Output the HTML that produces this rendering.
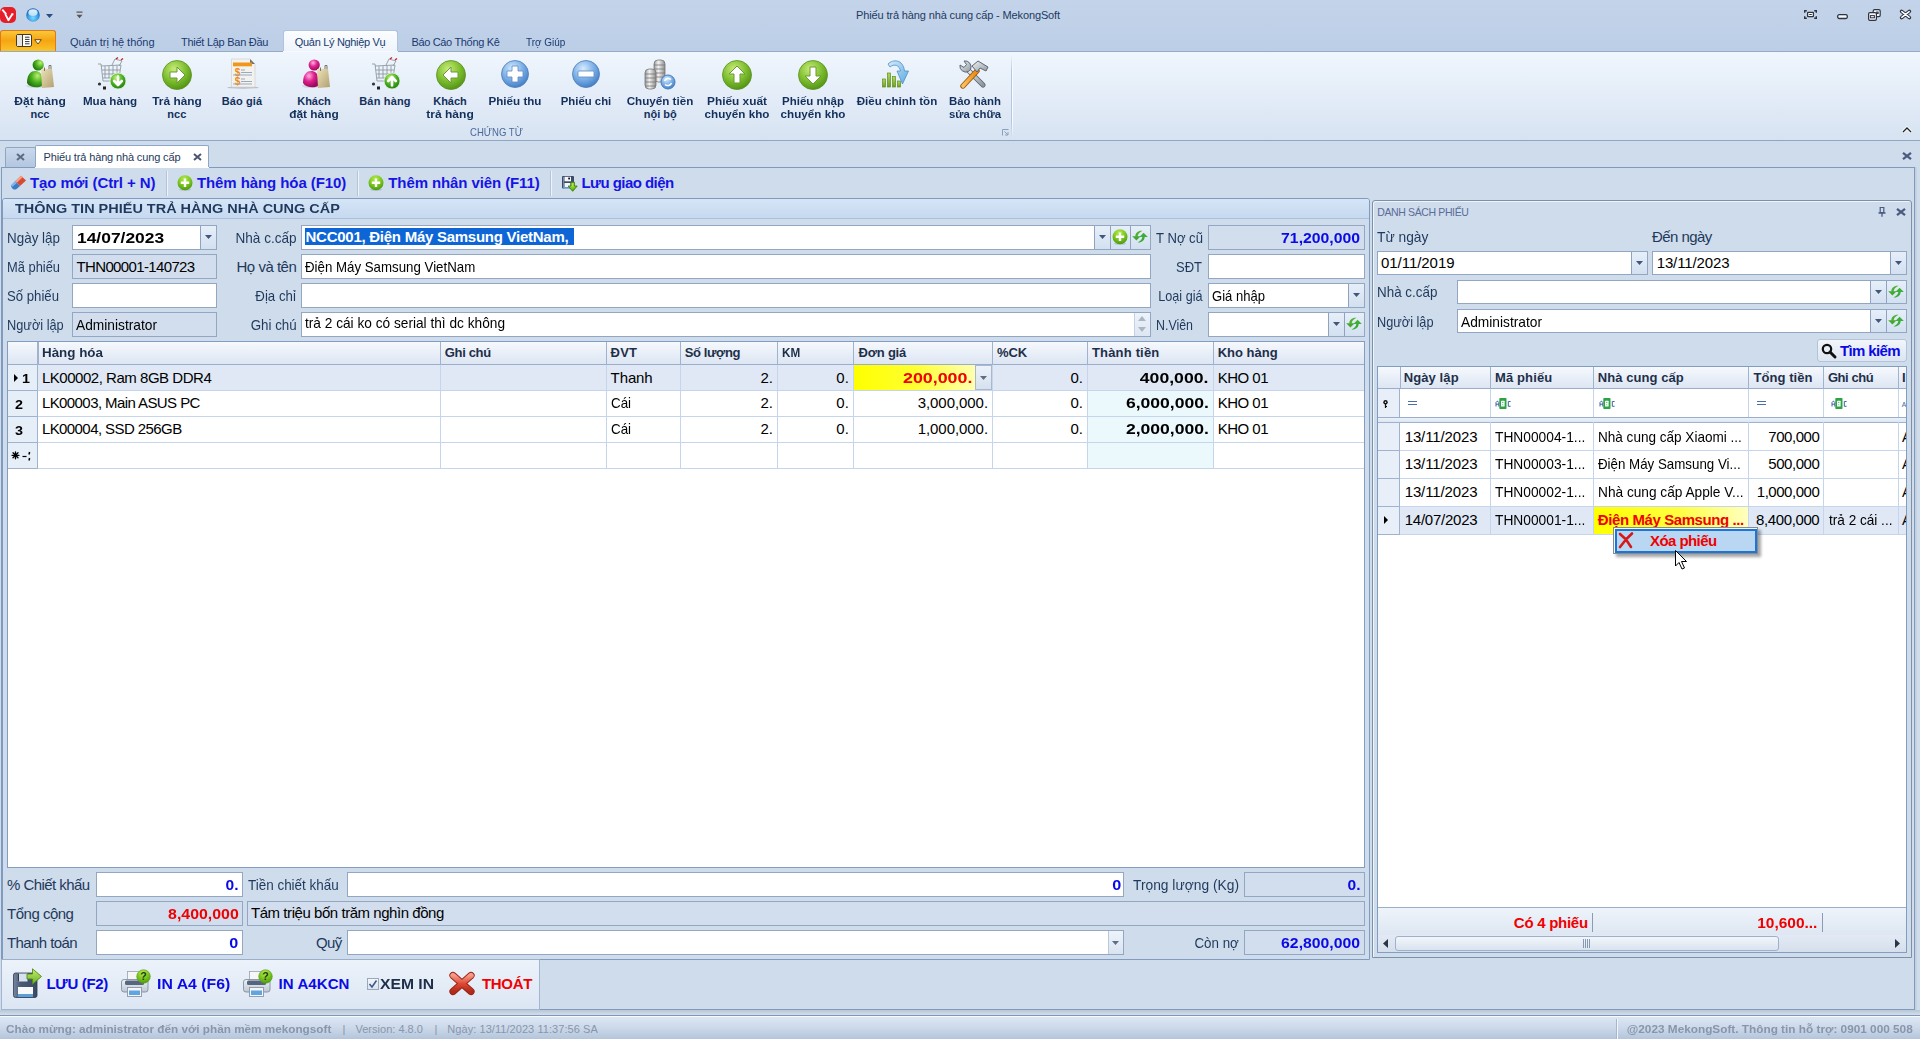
<!DOCTYPE html>
<html><head><meta charset="utf-8">
<style>
*{box-sizing:border-box}
html,body{margin:0;padding:0}
body{width:1920px;height:1039px;position:relative;overflow:hidden;background:#CFDCEC;font-family:"Liberation Sans",sans-serif;font-size:14px;color:#000}
.a{position:absolute}
.t{position:absolute;white-space:nowrap}
svg{overflow:visible}
</style></head><body>
<div class="a" style="left:0px;top:0px;width:1920px;height:52px;background:linear-gradient(#C3D4EA,#BCCEE6)"></div>
<svg class="a" style="left:0px;top:7px;" width="16" height="16" viewBox="0 0 16 16"><rect x="0" y="0" width="16" height="16" rx="5" fill="#E61E2A"/><path d="M2.3 2.6 L6.2 7.2 M5.2 6.8 L8.4 13.2 L12.6 6.8 M11.3 7.2 H13.4" stroke="#fff" stroke-width="1.9" fill="none" stroke-linejoin="round"/></svg>
<svg class="a" style="left:26px;top:8px;" width="14" height="14" viewBox="0 0 14 14"><defs><radialGradient id="sph" cx="50%" cy="70%" r="60%"><stop offset="0" stop-color="#7FDCFF"/><stop offset="0.6" stop-color="#3C9FE6"/><stop offset="1" stop-color="#1864C0"/></radialGradient><linearGradient id="sphh" x1="0" x2="0" y1="0" y2="1"><stop offset="0" stop-color="#FFFFFF"/><stop offset="1" stop-color="#BFE4F8"/></linearGradient></defs><circle cx="7" cy="7" r="6.8" fill="url(#sph)"/><ellipse cx="7" cy="4.6" rx="4.6" ry="3.4" fill="url(#sphh)" opacity="0.9"/></svg>
<svg class="a" style="left:46px;top:14px;" width="7" height="4" viewBox="0 0 7 4"><path d="M0 0 H7 L3.5 4Z" fill="#2B4E7E"/></svg>
<svg class="a" style="left:76px;top:11px;" width="8" height="8" viewBox="0 0 8 8"><rect x="0.5" y="0.5" width="6" height="1.2" fill="#555"/><path d="M0 3.5 H7 L3.5 7.5Z" fill="#555"/><path d="M0 3.5 H7 L3.5 7.5Z" fill="none" stroke="#fff" stroke-width="0.5" opacity="0.6"/></svg>
<div class="t" style="top:8.0px;height:14px;line-height:14px;font-size:11px;color:#1E3A5F;letter-spacing:-0.13px;left:558px;width:800px;text-align:center;">Phiếu trả hàng nhà cung cấp - MekongSoft</div>
<svg class="a" style="left:1804px;top:10px;" width="13" height="9" viewBox="0 0 13 9"><path d="M0.7 2.8V0.7H2.8 M10.2 0.7H12.3V2.8 M12.3 6.2V8.3H10.2 M2.8 8.3H0.7V6.2" stroke="#2D3340" stroke-width="1.4" fill="none"/><rect x="3.6" y="2.4" width="5.8" height="4.2" rx="0.6" fill="#fff" stroke="#2D3340" stroke-width="1.3"/><rect x="5.2" y="4" width="2.6" height="1" fill="#2D3340"/></svg>
<svg class="a" style="left:1837px;top:14px;" width="11" height="5" viewBox="0 0 11 5"><rect x="0.7" y="0.7" width="9.6" height="3.8" rx="1.5" fill="#F4F8FC" stroke="#2D3340" stroke-width="1.3"/></svg>
<svg class="a" style="left:1868px;top:9px;" width="13" height="12" viewBox="0 0 13 12"><rect x="5.2" y="0.6" width="7" height="7" rx="1.4" fill="#F4F8FC" stroke="#2D3340" stroke-width="1.2"/><rect x="0.6" y="3.6" width="7.8" height="7.8" rx="1.4" fill="#F4F8FC" stroke="#2D3340" stroke-width="1.2"/><rect x="2.4" y="6.6" width="4" height="2.2" fill="none" stroke="#2D3340" stroke-width="1"/><rect x="8.6" y="3" width="1.6" height="1.6" fill="none" stroke="#2D3340" stroke-width="0.9"/></svg>
<svg class="a" style="left:1900px;top:10px;" width="11" height="9" viewBox="0 0 11 9"><path d="M1.6 1.4 L9.4 7.6 M9.4 1.4 L1.6 7.6" stroke="#2D3340" stroke-width="3.6" stroke-linecap="round"/><path d="M1.8 1.6 L9.2 7.4 M9.2 1.6 L1.8 7.4" stroke="#fff" stroke-width="1.5" stroke-linecap="round"/></svg>
<div class="a" style="left:0px;top:30px;width:56px;height:22px;background:linear-gradient(#FAC83A,#F6A412 45%,#F9C82C);border:1px solid #E07A18;border-bottom:none;border-radius:3px 3px 0 0"></div>
<svg class="a" style="left:16px;top:34px;" width="16" height="13" viewBox="0 0 16 13"><rect x="0.5" y="0.5" width="15" height="12" rx="1.5" fill="#fff" stroke="#4A3A1A" stroke-width="1"/><rect x="1" y="1" width="5" height="11" fill="#E4E4E4"/><rect x="6" y="1" width="1" height="11" fill="#4A3A1A"/><path d="M9 3.2H13.5M9 5.4H13.5M9 7.6H13.5M9 9.8H13.5" stroke="#333" stroke-width="1"/></svg>
<svg class="a" style="left:34px;top:39px;" width="8" height="6" viewBox="0 0 8 6"><path d="M0.7 0.7 H7.3 L4 5 Z" fill="#fff" stroke="#6A4A10" stroke-width="1" stroke-linejoin="round"/></svg>
<div class="a" style="left:283px;top:30px;width:115px;height:22px;background:linear-gradient(#FBFDFF,#EEF4FB);border:1px solid #AFC3DE;border-bottom:none;border-radius:3px 3px 0 0"></div>
<div class="t" style="top:35.0px;height:14px;line-height:14px;font-size:11px;color:#1A3A70;letter-spacing:-0.03px;left:70px;">Quản trị hệ thống</div>
<div class="t" style="top:35.0px;height:14px;line-height:14px;font-size:11px;color:#1A3A70;letter-spacing:-0.27px;left:181px;">Thiết Lập Ban Đầu</div>
<div class="t" style="top:35.0px;height:14px;line-height:14px;font-size:11px;color:#1A3A70;letter-spacing:-0.32px;left:294.8px;">Quản Lý Nghiệp Vụ</div>
<div class="t" style="top:35.0px;height:14px;line-height:14px;font-size:11px;color:#1A3A70;letter-spacing:-0.33px;left:411.4px;">Báo Cáo Thống Kê</div>
<div class="t" style="top:35.0px;height:14px;line-height:14px;font-size:11px;color:#1A3A70;transform:scaleX(0.903);transform-origin:left center;left:525.7px;">Trợ Giúp</div>
<div class="a" style="left:0px;top:51px;width:1920px;height:90px;background:linear-gradient(#EFF6FD 0%,#E6EEF9 40%,#D7E3F2 100%);border-top:1px solid #94AAC6;border-bottom:1px solid #8FA6C4"></div>
<div class="a" style="left:283px;top:51px;width:115px;height:1px;background:#F6F9FD"></div>
<div class="a" style="left:1011px;top:55px;width:1px;height:84px;background:linear-gradient(rgba(160,180,210,0),#B5C7DF 20%,#B5C7DF 80%,rgba(160,180,210,0))"></div>
<div class="a" style="left:1012px;top:55px;width:1px;height:84px;background:linear-gradient(rgba(255,255,255,0),#F8FBFF 20%,#F8FBFF 80%,rgba(255,255,255,0))"></div>
<div class="t" style="top:125.0px;height:14px;line-height:14px;font-size:10.5px;color:#4A6898;transform:scaleX(0.911);transform-origin:left center;left:470px;">CHỨNG TỪ</div>
<svg class="a" style="left:1002px;top:129px;" width="7" height="7" viewBox="0 0 7 7"><path d="M0.5 6.5V0.5H6.5" stroke="#8BA0BC" fill="none"/><path d="M2.5 2.5L6 6M6 3V6H3" stroke="#8BA0BC" fill="none"/></svg>
<svg class="a" style="left:1902px;top:126px;" width="10" height="7" viewBox="0 0 10 7"><path d="M1 6L5 2L9 6" stroke="#fff" stroke-width="3" fill="none"/><path d="M1 6L5 2L9 6" stroke="#222" stroke-width="1.3" fill="none"/></svg>
<svg width="0" height="0" style="position:absolute"><defs>
<radialGradient id="gG" cx="70%" cy="30%" r="80%"><stop offset="0" stop-color="#B8F070"/><stop offset="0.5" stop-color="#4CB020"/><stop offset="1" stop-color="#1A6A08"/></radialGradient><radialGradient id="gA" cx="40%" cy="30%" r="75%"><stop offset="0" stop-color="#C8EC7A"/><stop offset="0.55" stop-color="#7DBE2E"/><stop offset="1" stop-color="#4E8E14"/></radialGradient>
<radialGradient id="gB" cx="40%" cy="30%" r="75%"><stop offset="0" stop-color="#D8ECFF"/><stop offset="0.55" stop-color="#78ADE6"/><stop offset="1" stop-color="#3E78C0"/></radialGradient>
<radialGradient id="gP" cx="40%" cy="30%" r="70%"><stop offset="0" stop-color="#FFB0E0"/><stop offset="0.5" stop-color="#E0208F"/><stop offset="1" stop-color="#9A0A5A"/></radialGradient>
<radialGradient id="gP2" cx="40%" cy="30%" r="75%"><stop offset="0" stop-color="#C6F27A"/><stop offset="0.5" stop-color="#4DB324"/><stop offset="1" stop-color="#1E7A10"/></radialGradient>
<linearGradient id="bag" x1="0" x2="1" y1="0" y2="1"><stop offset="0" stop-color="#EDE2B8"/><stop offset="1" stop-color="#B0A070"/></linearGradient>
<linearGradient id="coin" x1="0" x2="1"><stop offset="0" stop-color="#9A9A9A"/><stop offset="0.4" stop-color="#F2F2F2"/><stop offset="1" stop-color="#8C8C8C"/></linearGradient>
<radialGradient id="gLime" cx="45%" cy="25%" r="75%"><stop offset="0" stop-color="#B6EC4A"/><stop offset="0.6" stop-color="#76C21C"/><stop offset="1" stop-color="#4E9A10"/></radialGradient>
</defs></svg>
<svg class="a" style="left:24px;top:59px;" width="32" height="32" viewBox="0 0 32 32"><ellipse cx="11" cy="27" rx="9" ry="2" fill="#C8D2DE" opacity="0.7"/><path d="M3 24 C3 15 7 12 11 12 C15 12 18 14 18 20 L18 27 C14 29 6 29 3 24 Z" fill="url(#gG)"/><circle cx="14.2" cy="6" r="5.6" fill="url(#gG)"/><path d="M17 10 H28 L30 28 L18 29 Z" fill="url(#bag)"/><path d="M20.5 12 V8.5 M25 10 V6.5 H27 V10" stroke="#7A7468" stroke-width="1" fill="none"/></svg>
<svg class="a" style="left:97px;top:57px;" width="32" height="34" viewBox="0 0 32 34"><g stroke="#9098A0" stroke-width="0.9" fill="none"><path d="M1 7 H4 L6 24 H20"/><path d="M4 9 L24 8 L22 21 H6"/><path d="M8 9 V21 M12 9 V21 M16 8.5 V21 M20 8.5 V21 M5 13 H23 M5.5 17 H22.5"/><path d="M15 8 L18 2 L25 4 L22 9"/></g><path d="M19 2 L21 0.5 M24 3 L26 1.5" stroke="#D02020" stroke-width="1.4"/><circle cx="2.5" cy="27" r="1.6" fill="#333"/><rect x="6" y="29.5" width="3" height="3" fill="#222"/><circle cx="21" cy="24" r="8" fill="url(#gP2)" stroke="#E8F4E0" stroke-width="0.8"/><path d="M21 19.5 V27.5 M17.2 24 L21 28 L24.8 24" stroke="#fff" stroke-width="2.6" fill="none" stroke-linecap="round" stroke-linejoin="round"/></svg>
<svg class="a" style="left:161px;top:59px;" width="32" height="32" viewBox="0 0 32 32"><circle cx="16" cy="16" r="14.5" fill="url(#gA)" stroke="#5A8F20" stroke-width="0.8"/><path d="M9 13 H16 V8 L24 16 L16 24 V19 H9 Z" fill="#fff" stroke="#6A9A38" stroke-width="1"/></svg>
<svg class="a" style="left:226px;top:58px;" width="34" height="32" viewBox="0 0 34 32"><ellipse cx="17" cy="29.5" rx="16" ry="1.2" fill="#B8BEC6"/><path d="M5.5 1 H24 L29 6 V29 H5.5 Z" fill="#F2F2F0" stroke="#D4D4D2" stroke-width="0.8"/><path d="M24 1 L29 6 H24 Z" fill="#6E7278"/><rect x="7" y="4.5" width="19" height="3.8" fill="#F0961A"/><text x="11.5" y="18" font-size="10" font-weight="bold" font-family="Liberation Sans" text-anchor="middle" fill="#F08A10">$</text><text x="11.5" y="27" font-size="10" font-weight="bold" font-family="Liberation Sans" text-anchor="middle" fill="#F08A10">$</text><path d="M15 12 H19 M15 14.5 H26 M7 17 H26 M15 21 H19 M15 23.5 H26 M7 26 H26" stroke="#9AAAB8" stroke-width="1"/></svg>
<svg class="a" style="left:300px;top:59px;" width="32" height="32" viewBox="0 0 32 32"><ellipse cx="11" cy="27" rx="9" ry="2" fill="#C8D2DE" opacity="0.7"/><path d="M3 24 C3 15 7 12 11 12 C15 12 18 14 18 20 L18 27 C14 29 6 29 3 24 Z" fill="url(#gP)"/><circle cx="14.2" cy="6" r="5.6" fill="url(#gP)"/><path d="M17 10 H28 L30 28 L18 29 Z" fill="url(#bag)"/><path d="M20.5 12 V8.5 M25 10 V6.5 H27 V10" stroke="#7A7468" stroke-width="1" fill="none"/></svg>
<svg class="a" style="left:371px;top:57px;" width="32" height="34" viewBox="0 0 32 34"><g stroke="#9098A0" stroke-width="0.9" fill="none"><path d="M1 7 H4 L6 24 H20"/><path d="M4 9 L24 8 L22 21 H6"/><path d="M8 9 V21 M12 9 V21 M16 8.5 V21 M20 8.5 V21 M5 13 H23 M5.5 17 H22.5"/><path d="M15 8 L18 2 L25 4 L22 9"/></g><path d="M19 2 L21 0.5 M24 3 L26 1.5" stroke="#D02020" stroke-width="1.4"/><circle cx="2.5" cy="27" r="1.6" fill="#333"/><rect x="6" y="29.5" width="3" height="3" fill="#222"/><circle cx="21" cy="24" r="8" fill="url(#gP2)" stroke="#E8F4E0" stroke-width="0.8"/><path d="M21 28.5 V20.5 M17.2 24 L21 20 L24.8 24" stroke="#fff" stroke-width="2.6" fill="none" stroke-linecap="round" stroke-linejoin="round"/></svg>
<svg class="a" style="left:435px;top:59px;" width="32" height="32" viewBox="0 0 32 32"><circle cx="16" cy="16" r="14.5" fill="url(#gA)" stroke="#5A8F20" stroke-width="0.8"/><path d="M23 13 H16 V8 L8 16 L16 24 V19 H23 Z" fill="#fff" stroke="#6A9A38" stroke-width="1"/></svg>
<svg class="a" style="left:501px;top:59px;" width="32" height="32" viewBox="0 0 32 32"><circle cx="14" cy="15" r="13.5" fill="url(#gB)" stroke="#4A7DB8" stroke-width="0.8"/><path d="M11 7 H17 V12 H22 V18 H17 V23 H11 V18 H6 V12 H11 Z" fill="#fff" stroke="#5A88C0" stroke-width="0.8"/></svg>
<svg class="a" style="left:572px;top:59px;" width="32" height="32" viewBox="0 0 32 32"><circle cx="14" cy="15" r="13.5" fill="url(#gB)" stroke="#4A7DB8" stroke-width="0.8"/><rect x="6" y="12" width="16" height="6" rx="1" fill="#fff" stroke="#5A88C0" stroke-width="0.8"/></svg>
<svg class="a" style="left:644px;top:57px;" width="32" height="34" viewBox="0 0 32 34"><g stroke="#777" stroke-width="0.8" fill="url(#coin)"><rect x="10" y="3" width="11" height="22" rx="4"/><path d="M10 8 H21 M10 12 H21 M10 16 H21 M10 20 H21" fill="none"/><rect x="1" y="12" width="11" height="20" rx="4"/><path d="M1 17 H12 M1 21 H12 M1 25 H12 M1 29 H12" fill="none"/></g><circle cx="24" cy="25" r="7" fill="url(#gB)" stroke="#4A7DB8"/><path d="M20.5 24 A4 4 0 0 1 27 22.5 M27.5 26 A4 4 0 0 1 21 27.5" stroke="#fff" stroke-width="1.5" fill="none"/></svg>
<svg class="a" style="left:721px;top:59px;" width="32" height="32" viewBox="0 0 32 32"><circle cx="16" cy="16" r="14.5" fill="url(#gA)" stroke="#5A8F20" stroke-width="0.8"/><path d="M16 7 L24 15 H19 V24 H13 V15 H8 Z" fill="#fff" stroke="#6A9A38" stroke-width="1"/></svg>
<svg class="a" style="left:797px;top:59px;" width="32" height="32" viewBox="0 0 32 32"><circle cx="16" cy="16" r="14.5" fill="url(#gA)" stroke="#5A8F20" stroke-width="0.8"/><path d="M16 25 L24 17 H19 V8 H13 V17 H8 Z" fill="#fff" stroke="#6A9A38" stroke-width="1"/></svg>
<svg class="a" style="left:881px;top:58px;" width="32" height="33" viewBox="0 0 32 33"><defs><linearGradient id="arw" x1="0" y1="0" x2="1" y2="1"><stop offset="0" stop-color="#D8ECFB"/><stop offset="1" stop-color="#5AA8E0"/></linearGradient><linearGradient id="bar" x1="0" x2="0" y1="0" y2="1"><stop offset="0" stop-color="#B2D860"/><stop offset="1" stop-color="#6AA020"/></linearGradient></defs><g fill="url(#bar)" stroke="#5E8E1E" stroke-width="0.7"><rect x="1.5" y="21" width="3" height="8"/><rect x="6.5" y="15" width="3" height="14"/><rect x="11.5" y="18.5" width="3" height="10.5"/><rect x="16.5" y="23" width="3" height="6"/></g><path d="M7 6 C12 1 22 1 23.5 13 L27.5 13 L21.5 26 L16 13 L19.5 13 C18.5 7 13 5.5 9 9 Z" fill="url(#arw)" stroke="#4A90C8" stroke-width="0.8" stroke-linejoin="round"/></svg>
<svg class="a" style="left:958px;top:59px;" width="32" height="32" viewBox="0 0 32 32"><defs><linearGradient id="tg" x1="0" y1="0" x2="1" y2="1"><stop offset="0" stop-color="#F2F4F6"/><stop offset="1" stop-color="#8C96A0"/></linearGradient><linearGradient id="og" x1="0" y1="0" x2="1" y2="0"><stop offset="0" stop-color="#FFC060"/><stop offset="1" stop-color="#E58A10"/></linearGradient></defs><path d="M9 10 L25 26" stroke="#5E6670" stroke-width="5.2" stroke-linecap="round"/><path d="M9 10 L25 26" stroke="url(#tg)" stroke-width="3.4" stroke-linecap="round"/><path d="M2 6 A6 6 0 0 0 10.5 12.5 L12.5 10.5 A6 6 0 0 0 6 2 L8.5 5.5 L6 8.5 Z" fill="url(#tg)" stroke="#5E6670" stroke-width="1"/><path d="M5 27 L19 12" stroke="#9A5A10" stroke-width="5.4" stroke-linecap="round"/><path d="M5 27 L19 12" stroke="url(#og)" stroke-width="3.6" stroke-linecap="round"/><path d="M14 7 L20 2 L30 8 L28 12 L22 9 L19 13 Z" fill="url(#tg)" stroke="#5E6670" stroke-width="1" stroke-linejoin="round"/></svg>
<div class="t" style="top:94.0px;height:14px;line-height:14px;font-size:11px;color:#13305C;font-weight:bold;transform:scaleX(1.094);transform-origin:center center;left:-360px;width:800px;text-align:center;">Đặt hàng</div>
<div class="t" style="top:107.0px;height:14px;line-height:14px;font-size:11px;color:#13305C;font-weight:bold;letter-spacing:0.01px;left:-360px;width:800px;text-align:center;">ncc</div>
<div class="t" style="top:94.0px;height:14px;line-height:14px;font-size:11px;color:#13305C;font-weight:bold;transform:scaleX(1.056);transform-origin:center center;left:-289.6px;width:800px;text-align:center;">Mua hàng</div>
<div class="t" style="top:94.0px;height:14px;line-height:14px;font-size:11px;color:#13305C;font-weight:bold;transform:scaleX(1.079);transform-origin:center center;left:-223.2px;width:800px;text-align:center;">Trả hàng</div>
<div class="t" style="top:107.0px;height:14px;line-height:14px;font-size:11px;color:#13305C;font-weight:bold;letter-spacing:0.01px;left:-223.2px;width:800px;text-align:center;">ncc</div>
<div class="t" style="top:94.0px;height:14px;line-height:14px;font-size:11px;color:#13305C;font-weight:bold;letter-spacing:0.11px;left:-158px;width:800px;text-align:center;">Báo giá</div>
<div class="t" style="top:94.0px;height:14px;line-height:14px;font-size:11px;color:#13305C;font-weight:bold;letter-spacing:-0.03px;left:-86px;width:800px;text-align:center;">Khách</div>
<div class="t" style="top:107.0px;height:14px;line-height:14px;font-size:11px;color:#13305C;font-weight:bold;transform:scaleX(1.080);transform-origin:center center;left:-86px;width:800px;text-align:center;">đặt hàng</div>
<div class="t" style="top:94.0px;height:14px;line-height:14px;font-size:11px;color:#13305C;font-weight:bold;letter-spacing:0.17px;left:-15px;width:800px;text-align:center;">Bán hàng</div>
<div class="t" style="top:94.0px;height:14px;line-height:14px;font-size:11px;color:#13305C;font-weight:bold;letter-spacing:-0.03px;left:50px;width:800px;text-align:center;">Khách</div>
<div class="t" style="top:107.0px;height:14px;line-height:14px;font-size:11px;color:#13305C;font-weight:bold;transform:scaleX(1.094);transform-origin:center center;left:50px;width:800px;text-align:center;">trả hàng</div>
<div class="t" style="top:94.0px;height:14px;line-height:14px;font-size:11px;color:#13305C;font-weight:bold;transform:scaleX(1.057);transform-origin:center center;left:114.5px;width:800px;text-align:center;">Phiếu thu</div>
<div class="t" style="top:94.0px;height:14px;line-height:14px;font-size:11px;color:#13305C;font-weight:bold;transform:scaleX(1.032);transform-origin:center center;left:186px;width:800px;text-align:center;">Phiếu chi</div>
<div class="t" style="top:94.0px;height:14px;line-height:14px;font-size:11px;color:#13305C;font-weight:bold;transform:scaleX(1.059);transform-origin:center center;left:260.29999999999995px;width:800px;text-align:center;">Chuyển tiền</div>
<div class="t" style="top:107.0px;height:14px;line-height:14px;font-size:11px;color:#13305C;font-weight:bold;left:260.29999999999995px;width:800px;text-align:center;">nội bộ</div>
<div class="t" style="top:94.0px;height:14px;line-height:14px;font-size:11px;color:#13305C;font-weight:bold;transform:scaleX(1.078);transform-origin:center center;left:337px;width:800px;text-align:center;">Phiếu xuất</div>
<div class="t" style="top:107.0px;height:14px;line-height:14px;font-size:11px;color:#13305C;font-weight:bold;transform:scaleX(1.060);transform-origin:center center;left:337px;width:800px;text-align:center;">chuyển kho</div>
<div class="t" style="top:94.0px;height:14px;line-height:14px;font-size:11px;color:#13305C;font-weight:bold;transform:scaleX(1.044);transform-origin:center center;left:413px;width:800px;text-align:center;">Phiếu nhập</div>
<div class="t" style="top:107.0px;height:14px;line-height:14px;font-size:11px;color:#13305C;font-weight:bold;transform:scaleX(1.060);transform-origin:center center;left:413px;width:800px;text-align:center;">chuyển kho</div>
<div class="t" style="top:94.0px;height:14px;line-height:14px;font-size:11px;color:#13305C;font-weight:bold;transform:scaleX(1.054);transform-origin:center center;left:497.20000000000005px;width:800px;text-align:center;">Điều chỉnh tồn</div>
<div class="t" style="top:94.0px;height:14px;line-height:14px;font-size:11px;color:#13305C;font-weight:bold;transform:scaleX(1.037);transform-origin:center center;left:574.9px;width:800px;text-align:center;">Bảo hành</div>
<div class="t" style="top:107.0px;height:14px;line-height:14px;font-size:11px;color:#13305C;font-weight:bold;transform:scaleX(1.035);transform-origin:center center;left:574.9px;width:800px;text-align:center;">sửa chữa</div>
<div class="a" style="left:5px;top:147px;width:31px;height:21px;background:linear-gradient(#C9D8EC,#B3C6DF);border:1px solid #8EA5C4;border-bottom:none;border-radius:2px 2px 0 0"></div>
<svg class="a" style="left:16px;top:153px;" width="9" height="8" viewBox="0 0 9 8"><path d="M1 1L8 7M8 1L1 7" stroke="#5D6B80" stroke-width="2"/></svg>
<div class="a" style="left:35px;top:145px;width:174px;height:23px;background:#fff;border:1px solid #8EA7C8;border-bottom:none;border-radius:2px 2px 0 0"></div>
<div class="t" style="top:150.0px;height:14px;line-height:14px;font-size:11px;color:#1E395B;letter-spacing:-0.14px;left:43.5px;">Phiếu trả hàng nhà cung cấp</div>
<svg class="a" style="left:193px;top:153px;" width="9" height="8" viewBox="0 0 9 8"><path d="M1 1L8 7M8 1L1 7" stroke="#4A5670" stroke-width="2"/></svg>
<svg class="a" style="left:1902px;top:152px;" width="10" height="8" viewBox="0 0 10 8"><path d="M1 0.8L9 7.2M9 0.8L1 7.2" stroke="#4A5A7E" stroke-width="2.2"/></svg>
<div class="a" style="left:1px;top:167px;width:1914px;height:843px;border:1px solid #809ABD;background:#CFDCEC;box-shadow:1px 0 0 #C2CEDD,2px 0 0 #C8D3E1"></div>
<div class="a" style="left:35px;top:167px;width:174px;height:1px;background:#fff"></div>
<div class="a" style="left:166px;top:171px;width:1px;height:25px;background:#B2C3DA"></div>
<div class="a" style="left:167px;top:171px;width:1px;height:25px;background:#EEF3FA"></div>
<div class="a" style="left:357px;top:171px;width:1px;height:25px;background:#B2C3DA"></div>
<div class="a" style="left:358px;top:171px;width:1px;height:25px;background:#EEF3FA"></div>
<div class="a" style="left:550px;top:171px;width:1px;height:25px;background:#B2C3DA"></div>
<div class="a" style="left:551px;top:171px;width:1px;height:25px;background:#EEF3FA"></div>
<svg class="a" style="left:10px;top:175px;" width="17" height="15" viewBox="0 0 17 15"><path d="M5.2 6.2 L11 0.8 L16 5.4 L10 11 Z" fill="#D84A32"/><path d="M5.2 6.2 L11 0.8 L12.6 2.2 L6.8 7.7 Z" fill="#F4A58A"/><path d="M1.2 10.3 L5.2 6.2 L10 11 L6.3 14.3 Q4.5 15 2.8 14 Q0.6 12 1.2 10.3 Z" fill="#3C7CC4"/><path d="M1.2 10.3 L5.2 6.2 L6.8 7.7 L2.6 11.8 Z" fill="#80B8EE"/></svg>
<div class="t" style="top:173.0px;height:20px;line-height:20px;font-size:15px;color:#1515E6;font-weight:bold;letter-spacing:-0.08px;left:30px;">Tạo mới (Ctrl + N)</div>
<svg class="a" style="left:177px;top:175px;" width="16" height="16" viewBox="0 0 16 16"><ellipse cx="8" cy="14.5" rx="6" ry="1.5" fill="#9FB0C6" opacity="0.6"/><circle cx="8" cy="7.7" r="7.5" fill="url(#gLime)"/><path d="M8 3.5V12M3.8 7.7H12.2" stroke="#fff" stroke-width="2.4"/></svg>
<div class="t" style="top:173.0px;height:20px;line-height:20px;font-size:15px;color:#1515E6;font-weight:bold;letter-spacing:-0.08px;left:196.9px;">Thêm hàng hóa (F10)</div>
<svg class="a" style="left:368px;top:175px;" width="16" height="16" viewBox="0 0 16 16"><ellipse cx="8" cy="14.5" rx="6" ry="1.5" fill="#9FB0C6" opacity="0.6"/><circle cx="8" cy="7.7" r="7.5" fill="url(#gLime)"/><path d="M8 3.5V12M3.8 7.7H12.2" stroke="#fff" stroke-width="2.4"/></svg>
<div class="t" style="top:173.0px;height:20px;line-height:20px;font-size:15px;color:#1515E6;font-weight:bold;letter-spacing:-0.10px;left:388.3px;">Thêm nhân viên (F11)</div>
<svg class="a" style="left:561px;top:175px;" width="17" height="17" viewBox="0 0 17 17"><rect x="1" y="1" width="12" height="12.5" rx="1" fill="#3C4C68"/><rect x="2" y="2" width="1" height="11" fill="#7A8AA6"/><rect x="3.5" y="1.8" width="6.5" height="4.5" fill="#F4F6FA"/><rect x="7.2" y="2.6" width="1.8" height="1.8" fill="#111"/><rect x="3.5" y="8" width="6" height="5.5" fill="#F4F6FA"/><rect x="3.5" y="12" width="6" height="1.5" fill="#5A9AD8"/><path d="M10 7.2 H13.4 V11 H16.2 L11.7 16.3 L7.2 11 H10 Z" fill="url(#gLime)" stroke="#3E7A12" stroke-width="0.9" stroke-linejoin="round"/></svg>
<div class="t" style="top:173.0px;height:20px;line-height:20px;font-size:15px;color:#1515E6;font-weight:bold;letter-spacing:-0.54px;left:581.5px;">Lưu giao diện</div>
<div class="a" style="left:2px;top:198px;width:1368px;height:762px;border:1px solid #809BBE;border-radius:3px 3px 0 0;background:#CFDCEC"></div>
<div class="a" style="left:3px;top:199px;width:1366px;height:20px;background:linear-gradient(#D6E5F7,#C6D9F0);border-bottom:1px solid #A9C0DC;border-radius:2px 2px 0 0"></div>
<div class="t" style="top:200.0px;height:18px;line-height:18px;font-size:13.5px;color:#1E395B;font-weight:bold;transform:scaleX(1.072);transform-origin:left center;left:15px;">THÔNG TIN PHIẾU TRẢ HÀNG NHÀ CUNG CẤP</div>
<div class="t" style="top:227.5px;height:20px;line-height:20px;font-size:15px;color:#1E395B;transform:scaleX(0.895);transform-origin:left center;left:7.25px;">Ngày lập</div>
<div class="t" style="top:256.5px;height:20px;line-height:20px;font-size:15px;color:#1E395B;transform:scaleX(0.859);transform-origin:left center;left:7.25px;">Mã phiếu</div>
<div class="t" style="top:285.5px;height:20px;line-height:20px;font-size:15px;color:#1E395B;transform:scaleX(0.878);transform-origin:left center;left:7.25px;">Số phiếu</div>
<div class="t" style="top:314.5px;height:20px;line-height:20px;font-size:15px;color:#1E395B;transform:scaleX(0.852);transform-origin:left center;left:7.25px;">Người lập</div>
<div class="a" style="left:72px;top:225px;width:145px;height:25px;background:#FFFFFF;border:1px solid #93A7C3;"></div>
<div class="a" style="left:200px;top:226px;width:16px;height:23px;background:linear-gradient(#E6EFF9,#D3E0F0);border-left:1px solid #8FA3BF"></div>
<svg class="a" style="left:205px;top:235px;" width="7" height="4" viewBox="0 0 7 4"><path d="M0 0H7L3.5 4Z" fill="#44557A"/></svg>
<div class="t" style="top:227.5px;height:20px;line-height:20px;font-size:15px;color:#000;font-weight:bold;transform:scaleX(1.161);transform-origin:left center;left:76.5px;">14/07/2023</div>
<div class="a" style="left:72px;top:254px;width:145px;height:25px;background:#D2DEEE;border:1px solid #93A7C3;"></div>
<div class="t" style="top:256.5px;height:20px;line-height:20px;font-size:15px;color:#000;letter-spacing:-0.64px;left:76.5px;">THN00001-140723</div>
<div class="a" style="left:72px;top:283px;width:145px;height:25px;background:#FFFFFF;border:1px solid #93A7C3;"></div>
<div class="a" style="left:72px;top:312px;width:145px;height:25px;background:#D2DEEE;border:1px solid #93A7C3;"></div>
<div class="t" style="top:314.5px;height:20px;line-height:20px;font-size:15px;color:#000;transform:scaleX(0.917);transform-origin:left center;left:76px;">Administrator</div>
<div class="t" style="top:227.5px;height:20px;line-height:20px;font-size:15px;color:#1E395B;transform:scaleX(0.903);transform-origin:right center;right:1623.7px;">Nhà c.cấp</div>
<div class="t" style="top:256.5px;height:20px;line-height:20px;font-size:15px;color:#1E395B;letter-spacing:-0.49px;right:1623.7px;">Họ và tên</div>
<div class="t" style="top:285.5px;height:20px;line-height:20px;font-size:15px;color:#1E395B;transform:scaleX(0.883);transform-origin:right center;right:1623.7px;">Địa chỉ</div>
<div class="t" style="top:314.5px;height:20px;line-height:20px;font-size:15px;color:#1E395B;transform:scaleX(0.890);transform-origin:right center;right:1623.7px;">Ghi chú</div>
<div class="a" style="left:301px;top:225px;width:850px;height:25px;background:#FFFFFF;border:1px solid #93A7C3;"></div>
<div class="a" style="left:305px;top:228px;width:269px;height:17px;background:#0E66D6"></div>
<div class="t" style="top:227.0px;height:20px;line-height:20px;font-size:15px;color:#fff;font-weight:bold;letter-spacing:-0.26px;left:305.5px;">NCC001, Điện Máy Samsung VietNam,</div>
<div class="a" style="left:1094px;top:226px;width:16px;height:23px;background:linear-gradient(#E6EFF9,#D3E0F0);border-left:1px solid #8FA3BF"></div>
<svg class="a" style="left:1099px;top:235px;" width="7" height="4" viewBox="0 0 7 4"><path d="M0 0H7L3.5 4Z" fill="#44557A"/></svg>
<div class="a" style="left:1110px;top:226px;width:20px;height:23px;background:linear-gradient(#E6EFF9,#D3E0F0);border-left:1px solid #8FA3BF"></div>
<svg class="a" style="left:1112px;top:229px;" width="16" height="16" viewBox="0 0 16 16"><ellipse cx="8" cy="14.5" rx="6" ry="1.5" fill="#9FB0C6" opacity="0.6"/><circle cx="8" cy="7.7" r="7.5" fill="url(#gLime)"/><path d="M8 3.5V12M3.8 7.7H12.2" stroke="#fff" stroke-width="2.4"/></svg>
<div class="a" style="left:1130px;top:226px;width:20px;height:23px;background:linear-gradient(#E6EFF9,#D3E0F0);border-left:1px solid #8FA3BF"></div>
<svg class="a" style="left:1132px;top:230px;" width="16" height="13" viewBox="0 0 16 13"><path d="M10.5 0.8 C6 0.5 3.2 3 3.3 6.8 L5.6 6.8 C5.6 4.2 7.5 2.3 10.5 0.8 Z" fill="#4DB030"/><path d="M0.2 6.3 L8.6 6.3 L4.4 10.6 Z" fill="#45A82E"/><path d="M5.5 12.6 C10 12.9 12.8 10.4 12.7 6.6 L10.4 6.6 C10.4 9.2 8.5 11.1 5.5 12.6 Z" fill="#3AAA3A"/><path d="M7.4 7 L15.8 7 L11.6 2.7 Z" fill="#3DAE36"/></svg>
<div class="a" style="left:301px;top:254px;width:850px;height:25px;background:#FFFFFF;border:1px solid #93A7C3;"></div>
<div class="t" style="top:256.5px;height:20px;line-height:20px;font-size:15px;color:#000;transform:scaleX(0.885);transform-origin:left center;left:305.3px;">Điện Máy Samsung VietNam</div>
<div class="a" style="left:301px;top:283px;width:850px;height:25px;background:#FFFFFF;border:1px solid #93A7C3;"></div>
<div class="a" style="left:301px;top:312px;width:850px;height:25px;background:#FFFFFF;border:1px solid #93A7C3;"></div>
<div class="t" style="top:312.5px;height:20px;line-height:20px;font-size:15px;color:#000;transform:scaleX(0.912);transform-origin:left center;left:305px;">trả 2 cái ko có serial thì dc không</div>
<div class="a" style="left:1134px;top:313px;width:16px;height:23px;background:linear-gradient(#EEF3FA,#DDE6F2);border-left:1px solid #C5D2E3"></div>
<svg class="a" style="left:1138px;top:316px;" width="8" height="5" viewBox="0 0 8 5"><path d="M0 5H8L4 0Z" fill="#A9B6C8"/></svg>
<svg class="a" style="left:1138px;top:327px;" width="8" height="5" viewBox="0 0 8 5"><path d="M0 0H8L4 5Z" fill="#A9B6C8"/></svg>
<div class="t" style="top:227.5px;height:20px;line-height:20px;font-size:15px;color:#1E395B;transform:scaleX(0.874);transform-origin:left center;left:1155.6px;">T Nợ cũ</div>
<div class="t" style="top:256.5px;height:20px;line-height:20px;font-size:15px;color:#1E395B;transform:scaleX(0.867);transform-origin:right center;right:717.5999999999999px;">SĐT</div>
<div class="t" style="top:285.5px;height:20px;line-height:20px;font-size:15px;color:#1E395B;transform:scaleX(0.843);transform-origin:right center;right:717.4000000000001px;">Loại giá</div>
<div class="t" style="top:314.5px;height:20px;line-height:20px;font-size:15px;color:#1E395B;transform:scaleX(0.827);transform-origin:left center;left:1156.2px;">N.Viên</div>
<div class="a" style="left:1208px;top:225px;width:157px;height:25px;background:#D2DEEE;border:1px solid #93A7C3;"></div>
<div class="t" style="top:227.5px;height:20px;line-height:20px;font-size:15px;color:#0A0AE6;font-weight:bold;transform:scaleX(1.052);transform-origin:right center;right:559.5px;">71,200,000</div>
<div class="a" style="left:1208px;top:254px;width:157px;height:25px;background:#FFFFFF;border:1px solid #93A7C3;"></div>
<div class="a" style="left:1208px;top:283px;width:157px;height:25px;background:#FFFFFF;border:1px solid #93A7C3;"></div>
<div class="t" style="top:285.5px;height:20px;line-height:20px;font-size:15px;color:#000;transform:scaleX(0.870);transform-origin:left center;left:1211.7px;">Giá nhập</div>
<div class="a" style="left:1348px;top:284px;width:16px;height:23px;background:linear-gradient(#E6EFF9,#D3E0F0);border-left:1px solid #8FA3BF"></div>
<svg class="a" style="left:1353px;top:293px;" width="7" height="4" viewBox="0 0 7 4"><path d="M0 0H7L3.5 4Z" fill="#44557A"/></svg>
<div class="a" style="left:1208px;top:312px;width:157px;height:25px;background:#FFFFFF;border:1px solid #93A7C3;"></div>
<div class="a" style="left:1328px;top:313px;width:16px;height:23px;background:linear-gradient(#E6EFF9,#D3E0F0);border-left:1px solid #8FA3BF"></div>
<svg class="a" style="left:1333px;top:322px;" width="7" height="4" viewBox="0 0 7 4"><path d="M0 0H7L3.5 4Z" fill="#44557A"/></svg>
<div class="a" style="left:1344px;top:313px;width:20px;height:23px;background:linear-gradient(#E6EFF9,#D3E0F0);border-left:1px solid #8FA3BF"></div>
<svg class="a" style="left:1346px;top:317px;" width="16" height="13" viewBox="0 0 16 13"><path d="M10.5 0.8 C6 0.5 3.2 3 3.3 6.8 L5.6 6.8 C5.6 4.2 7.5 2.3 10.5 0.8 Z" fill="#4DB030"/><path d="M0.2 6.3 L8.6 6.3 L4.4 10.6 Z" fill="#45A82E"/><path d="M5.5 12.6 C10 12.9 12.8 10.4 12.7 6.6 L10.4 6.6 C10.4 9.2 8.5 11.1 5.5 12.6 Z" fill="#3AAA3A"/><path d="M7.4 7 L15.8 7 L11.6 2.7 Z" fill="#3DAE36"/></svg>
<div class="a" style="left:7px;top:341px;width:1358px;height:527px;background:#fff;border:1px solid #829DC0"></div>
<div class="a" style="left:8px;top:342px;width:1356px;height:23px;background:linear-gradient(#F6F9FD,#E9EFF8 50%,#DDE6F3);border-bottom:1px solid #9AAECB"></div>
<div class="a" style="left:38px;top:342px;width:1px;height:23px;background:#9FB3CF"></div>
<div class="a" style="left:440px;top:342px;width:1px;height:23px;background:#9FB3CF"></div>
<div class="a" style="left:606px;top:342px;width:1px;height:23px;background:#9FB3CF"></div>
<div class="a" style="left:680px;top:342px;width:1px;height:23px;background:#9FB3CF"></div>
<div class="a" style="left:777px;top:342px;width:1px;height:23px;background:#9FB3CF"></div>
<div class="a" style="left:853px;top:342px;width:1px;height:23px;background:#9FB3CF"></div>
<div class="a" style="left:992px;top:342px;width:1px;height:23px;background:#9FB3CF"></div>
<div class="a" style="left:1087px;top:342px;width:1px;height:23px;background:#9FB3CF"></div>
<div class="a" style="left:1213px;top:342px;width:1px;height:23px;background:#9FB3CF"></div>
<div class="a" style="left:8px;top:365px;width:30px;height:104px;background:#E6EEF8"></div>
<div class="a" style="left:8px;top:390px;width:30px;height:1px;background:#9FB3CF"></div>
<div class="a" style="left:8px;top:416px;width:30px;height:1px;background:#9FB3CF"></div>
<div class="a" style="left:8px;top:442px;width:30px;height:1px;background:#9FB3CF"></div>
<div class="a" style="left:8px;top:468px;width:30px;height:1px;background:#9FB3CF"></div>
<div class="a" style="left:37px;top:342px;width:1px;height:127px;background:#9FB3CF"></div>
<div class="a" style="left:38px;top:365px;width:1326px;height:25px;background:#DFE8F4"></div>
<div class="a" style="left:1088px;top:391px;width:125px;height:77px;background:#EBF8FC"></div>
<div class="a" style="left:38px;top:390px;width:1326px;height:1px;background:#C5D5EB"></div>
<div class="a" style="left:38px;top:416px;width:1326px;height:1px;background:#C5D5EB"></div>
<div class="a" style="left:38px;top:442px;width:1326px;height:1px;background:#C5D5EB"></div>
<div class="a" style="left:38px;top:468px;width:1326px;height:1px;background:#C5D5EB"></div>
<div class="a" style="left:440px;top:365px;width:1px;height:103px;background:#C5D5EB"></div>
<div class="a" style="left:606px;top:365px;width:1px;height:103px;background:#C5D5EB"></div>
<div class="a" style="left:680px;top:365px;width:1px;height:103px;background:#C5D5EB"></div>
<div class="a" style="left:777px;top:365px;width:1px;height:103px;background:#C5D5EB"></div>
<div class="a" style="left:853px;top:365px;width:1px;height:103px;background:#C5D5EB"></div>
<div class="a" style="left:992px;top:365px;width:1px;height:103px;background:#C5D5EB"></div>
<div class="a" style="left:1087px;top:365px;width:1px;height:103px;background:#C5D5EB"></div>
<div class="a" style="left:1213px;top:365px;width:1px;height:103px;background:#C5D5EB"></div>
<div class="a" style="left:854px;top:365px;width:121px;height:25px;background:linear-gradient(90deg,#FFFF00 0%,#FFFF30 50%,#FFFFB0 100%)"></div>
<div class="a" style="left:975px;top:365px;width:17px;height:25px;background:linear-gradient(#EDF2F9,#D6E1EF);border:1px solid #A7B8CF"></div>
<svg class="a" style="left:980px;top:376px;" width="7" height="4" viewBox="0 0 7 4"><path d="M0 0H7L3.5 4Z" fill="#5E6E84"/></svg>
<div class="t" style="top:344.3px;height:17px;line-height:17px;font-size:13px;color:#1E2F4A;font-weight:bold;transform:scaleX(1.030);transform-origin:left center;left:41.9px;">Hàng hóa</div>
<div class="t" style="top:344.3px;height:17px;line-height:17px;font-size:13px;color:#1E2F4A;font-weight:bold;letter-spacing:-0.34px;left:444.8px;">Ghi chú</div>
<div class="t" style="top:344.3px;height:17px;line-height:17px;font-size:13px;color:#1E2F4A;font-weight:bold;letter-spacing:0.20px;left:610.6px;">ĐVT</div>
<div class="t" style="top:344.3px;height:17px;line-height:17px;font-size:13px;color:#1E2F4A;font-weight:bold;letter-spacing:-0.37px;left:684.7px;">Số lượng</div>
<div class="t" style="top:344.3px;height:17px;line-height:17px;font-size:13px;color:#1E2F4A;font-weight:bold;transform:scaleX(0.900);transform-origin:left center;left:782px;">KM</div>
<div class="t" style="top:344.3px;height:17px;line-height:17px;font-size:13px;color:#1E2F4A;font-weight:bold;letter-spacing:-0.22px;left:858.6px;">Đơn giá</div>
<div class="t" style="top:344.3px;height:17px;line-height:17px;font-size:13px;color:#1E2F4A;font-weight:bold;letter-spacing:-0.11px;left:997px;">%CK</div>
<div class="t" style="top:344.3px;height:17px;line-height:17px;font-size:13px;color:#1E2F4A;font-weight:bold;letter-spacing:0.17px;left:1092px;">Thành tiền</div>
<div class="t" style="top:344.3px;height:17px;line-height:17px;font-size:13px;color:#1E2F4A;font-weight:bold;letter-spacing:0.01px;left:1217.7px;">Kho hàng</div>
<svg class="a" style="left:14px;top:374px;" width="4" height="8" viewBox="0 0 4 8"><path d="M0 0L4 4L0 8Z" fill="#000"/></svg>
<div class="t" style="top:369.5px;height:17px;line-height:17px;font-size:13px;color:#000;font-weight:bold;transform:scaleX(1.106);transform-origin:left center;left:22px;">1</div>
<div class="t" style="top:395.5px;height:17px;line-height:17px;font-size:13px;color:#000;font-weight:bold;transform:scaleX(1.106);transform-origin:left center;left:15px;">2</div>
<div class="t" style="top:421.5px;height:17px;line-height:17px;font-size:13px;color:#000;font-weight:bold;transform:scaleX(1.106);transform-origin:left center;left:15px;">3</div>
<svg class="a" style="left:11px;top:451px;" width="21" height="11" viewBox="0 0 21 11"><path d="M4.5 0.8 V7.8 M1 4.3 H8 M2 1.8 L7 6.8 M7 1.8 L2 6.8" stroke="#000" stroke-width="1.3" stroke-linecap="round"/><path d="M11.5 5.5 H15.5" stroke="#000" stroke-width="1.2"/><path d="M18.6 1 L18 3.5 M18.6 7 L18 9.5" stroke="#000" stroke-width="1.5"/></svg>
<div class="t" style="top:367.6px;height:20px;line-height:20px;font-size:15px;color:#000;letter-spacing:-0.47px;left:41.9px;">LK00002, Ram 8GB DDR4</div>
<div class="t" style="top:367.6px;height:20px;line-height:20px;font-size:15px;color:#000;letter-spacing:-0.11px;left:610.6px;">Thanh</div>
<div class="t" style="top:367.6px;height:20px;line-height:20px;font-size:15px;color:#000;letter-spacing:-0.01px;right:1147px;">2.</div>
<div class="t" style="top:367.6px;height:20px;line-height:20px;font-size:15px;color:#000;letter-spacing:-0.01px;right:1071.2px;">0.</div>
<div class="t" style="top:367.6px;height:20px;line-height:20px;font-size:15px;color:#000;letter-spacing:-0.01px;right:837px;">0.</div>
<div class="t" style="top:367.6px;height:20px;line-height:20px;font-size:15px;color:#000;letter-spacing:-0.51px;left:1217.7px;">KHO 01</div>
<div class="t" style="top:393.4px;height:20px;line-height:20px;font-size:15px;color:#000;letter-spacing:-0.58px;left:41.9px;">LK00003, Main ASUS PC</div>
<div class="t" style="top:393.4px;height:20px;line-height:20px;font-size:15px;color:#000;transform:scaleX(0.893);transform-origin:left center;left:610.6px;">Cái</div>
<div class="t" style="top:393.4px;height:20px;line-height:20px;font-size:15px;color:#000;letter-spacing:-0.01px;right:1147px;">2.</div>
<div class="t" style="top:393.4px;height:20px;line-height:20px;font-size:15px;color:#000;letter-spacing:-0.01px;right:1071.2px;">0.</div>
<div class="t" style="top:393.4px;height:20px;line-height:20px;font-size:15px;color:#000;letter-spacing:-0.01px;right:837px;">0.</div>
<div class="t" style="top:393.4px;height:20px;line-height:20px;font-size:15px;color:#000;letter-spacing:-0.51px;left:1217.7px;">KHO 01</div>
<div class="t" style="top:419.4px;height:20px;line-height:20px;font-size:15px;color:#000;letter-spacing:-0.58px;left:41.9px;">LK00004, SSD 256GB</div>
<div class="t" style="top:419.4px;height:20px;line-height:20px;font-size:15px;color:#000;transform:scaleX(0.893);transform-origin:left center;left:610.6px;">Cái</div>
<div class="t" style="top:419.4px;height:20px;line-height:20px;font-size:15px;color:#000;letter-spacing:-0.01px;right:1147px;">2.</div>
<div class="t" style="top:419.4px;height:20px;line-height:20px;font-size:15px;color:#000;letter-spacing:-0.01px;right:1071.2px;">0.</div>
<div class="t" style="top:419.4px;height:20px;line-height:20px;font-size:15px;color:#000;letter-spacing:-0.01px;right:837px;">0.</div>
<div class="t" style="top:419.4px;height:20px;line-height:20px;font-size:15px;color:#000;letter-spacing:-0.51px;left:1217.7px;">KHO 01</div>
<div class="t" style="top:367.6px;height:20px;line-height:20px;font-size:15px;color:#F00000;font-weight:bold;transform:scaleX(1.188);transform-origin:right center;right:947.6px;">200,000.</div>
<div class="t" style="top:393.4px;height:20px;line-height:20px;font-size:15px;color:#000;letter-spacing:-0.06px;right:932px;">3,000,000.</div>
<div class="t" style="top:419.4px;height:20px;line-height:20px;font-size:15px;color:#000;letter-spacing:-0.06px;right:932px;">1,000,000.</div>
<div class="t" style="top:367.6px;height:20px;line-height:20px;font-size:15px;color:#000;font-weight:bold;transform:scaleX(1.175);transform-origin:right center;right:711.4000000000001px;">400,000.</div>
<div class="t" style="top:393.4px;height:20px;line-height:20px;font-size:15px;color:#000;font-weight:bold;transform:scaleX(1.170);transform-origin:right center;right:711.4000000000001px;">6,000,000.</div>
<div class="t" style="top:419.4px;height:20px;line-height:20px;font-size:15px;color:#000;font-weight:bold;transform:scaleX(1.170);transform-origin:right center;right:711.4000000000001px;">2,000,000.</div>
<div class="t" style="top:874.7px;height:20px;line-height:20px;font-size:15px;color:#1E395B;letter-spacing:-0.56px;left:7px;">% Chiết khấu</div>
<div class="a" style="left:96px;top:872px;width:147px;height:25px;background:#FFFFFF;border:1px solid #93A7C3"></div>
<div class="t" style="top:874.7px;height:20px;line-height:20px;font-size:15px;color:#0A0AE6;font-weight:bold;transform:scaleX(1.039);transform-origin:right center;right:1681px;">0.</div>
<div class="t" style="top:874.7px;height:20px;line-height:20px;font-size:15px;color:#1E395B;transform:scaleX(0.897);transform-origin:left center;left:247.5px;">Tiền chiết khấu</div>
<div class="a" style="left:347px;top:872px;width:777px;height:25px;background:#FFFFFF;border:1px solid #93A7C3"></div>
<div class="t" style="top:874.7px;height:20px;line-height:20px;font-size:15px;color:#0A0AE6;font-weight:bold;transform:scaleX(1.079);transform-origin:right center;right:799px;">0</div>
<div class="t" style="top:874.7px;height:20px;line-height:20px;font-size:15px;color:#1E395B;transform:scaleX(0.920);transform-origin:left center;left:1133px;">Trọng lượng (Kg)</div>
<div class="a" style="left:1244px;top:872px;width:121px;height:25px;background:#D2DEEE;border:1px solid #93A7C3"></div>
<div class="t" style="top:874.7px;height:20px;line-height:20px;font-size:15px;color:#0A0AE6;font-weight:bold;transform:scaleX(1.039);transform-origin:right center;right:559px;">0.</div>
<div class="t" style="top:903.5px;height:20px;line-height:20px;font-size:15px;color:#1E395B;letter-spacing:-0.49px;left:7px;">Tổng cộng</div>
<div class="a" style="left:96px;top:901px;width:147px;height:25px;background:#D2DEEE;border:1px solid #93A7C3"></div>
<div class="t" style="top:903.5px;height:20px;line-height:20px;font-size:15px;color:#F00000;font-weight:bold;transform:scaleX(1.059);transform-origin:right center;right:1681.5px;">8,400,000</div>
<div class="a" style="left:247px;top:901px;width:1118px;height:25px;background:#D2DEEE;border:1px solid #93A7C3"></div>
<div class="t" style="top:902.8px;height:20px;line-height:20px;font-size:15px;color:#000;letter-spacing:-0.45px;left:251px;">Tám triệu bốn trăm nghìn đồng</div>
<div class="t" style="top:932.5px;height:20px;line-height:20px;font-size:15px;color:#1E395B;letter-spacing:-0.59px;left:7px;">Thanh toán</div>
<div class="a" style="left:96px;top:930px;width:147px;height:25px;background:#FFFFFF;border:1px solid #93A7C3"></div>
<div class="t" style="top:932.5px;height:20px;line-height:20px;font-size:15px;color:#0A0AE6;font-weight:bold;transform:scaleX(1.079);transform-origin:right center;right:1681.5px;">0</div>
<div class="t" style="top:932.5px;height:20px;line-height:20px;font-size:15px;color:#1E395B;letter-spacing:-0.67px;right:1578.5px;">Quỹ</div>
<div class="a" style="left:347px;top:930px;width:777px;height:25px;background:#FFFFFF;border:1px solid #93A7C3"></div>
<div class="a" style="left:1108px;top:931px;width:15px;height:23px;background:linear-gradient(#EEF3FA,#D9E4F1);border-left:1px solid #B9C8DC"></div>
<svg class="a" style="left:1112px;top:941px;" width="7" height="4" viewBox="0 0 7 4"><path d="M0 0H7L3.5 4Z" fill="#5E6E84"/></svg>
<div class="t" style="top:932.5px;height:20px;line-height:20px;font-size:15px;color:#1E395B;transform:scaleX(0.892);transform-origin:right center;right:681.5px;">Còn nợ</div>
<div class="a" style="left:1244px;top:930px;width:121px;height:25px;background:#D2DEEE;border:1px solid #93A7C3"></div>
<div class="t" style="top:932.5px;height:20px;line-height:20px;font-size:15px;color:#0A0AE6;font-weight:bold;transform:scaleX(1.052);transform-origin:right center;right:559.5px;">62,800,000</div>
<div class="a" style="left:1px;top:959px;width:539px;height:51px;background:linear-gradient(#ECF2FA,#DCE6F3);border:1px solid #A2B6D1;border-top:1px solid #9AAFCB"></div>
<svg class="a" style="left:13px;top:968px;" width="32" height="30" viewBox="0 0 32 30"><defs><linearGradient id="fl" x1="0" x2="1"><stop offset="0" stop-color="#7888A2"/><stop offset="0.3" stop-color="#4A5A76"/><stop offset="1" stop-color="#3A4A64"/></linearGradient><linearGradient id="ga" x1="0" x2="0" y1="0" y2="1"><stop offset="0" stop-color="#C8F070"/><stop offset="1" stop-color="#6AAE20"/></linearGradient></defs><rect x="0.5" y="5" width="23.5" height="24.5" rx="2" fill="url(#fl)" stroke="#2E3A50" stroke-width="0.8"/><rect x="4.5" y="5.5" width="10" height="8" fill="#D6E2EE"/><rect x="4.5" y="5.5" width="1.5" height="8" fill="#2E3A50"/><rect x="5" y="19" width="15" height="10" fill="#F6F8FA"/><rect x="5" y="26" width="15" height="3" fill="#5C9ED8"/><path d="M14 6 H19.5 V0.8 L28.5 8.5 L19.5 16.2 V11 H14 Z" fill="url(#ga)" stroke="#4E8A18" stroke-width="0.9" stroke-linejoin="round"/></svg>
<div class="t" style="top:974.2px;height:20px;line-height:20px;font-size:15px;color:#0A0AE6;font-weight:bold;letter-spacing:-0.32px;left:46.5px;">LƯU (F2)</div>
<svg class="a" style="left:121px;top:970px;" width="28" height="28" viewBox="0 0 28 28"><defs><linearGradient id="pb" x1="0" x2="0" y1="0" y2="1"><stop offset="0" stop-color="#F0F3F6"/><stop offset="1" stop-color="#BCC6D2"/></linearGradient></defs><rect x="6.5" y="1.5" width="12" height="9" fill="#F6F6F6" stroke="#98A2AE" stroke-width="0.8"/><rect x="0.5" y="9.5" width="26.5" height="12.5" rx="2.5" fill="url(#pb)" stroke="#8090A4" stroke-width="0.9"/><rect x="4" y="10.5" width="19" height="4.5" rx="1.5" fill="#56667E"/><rect x="6.5" y="17.5" width="14" height="9" fill="#F4F6F8" stroke="#8A96A6" stroke-width="0.9"/><rect x="8" y="20.5" width="11" height="4.5" fill="#60A4E2"/><circle cx="22.5" cy="6.5" r="6.8" fill="url(#gLime)" stroke="#5A9A20" stroke-width="0.6"/><text x="22.5" y="10.3" font-size="10.5" font-weight="bold" text-anchor="middle" fill="#1E3A10" font-family="Liberation Sans">?</text></svg>
<div class="t" style="top:974.2px;height:20px;line-height:20px;font-size:15px;color:#0A0AE6;font-weight:bold;transform:scaleX(1.055);transform-origin:left center;left:157px;">IN A4 (F6)</div>
<svg class="a" style="left:243px;top:970px;" width="28" height="28" viewBox="0 0 28 28"><defs><linearGradient id="pb" x1="0" x2="0" y1="0" y2="1"><stop offset="0" stop-color="#F0F3F6"/><stop offset="1" stop-color="#BCC6D2"/></linearGradient></defs><rect x="6.5" y="1.5" width="12" height="9" fill="#F6F6F6" stroke="#98A2AE" stroke-width="0.8"/><rect x="0.5" y="9.5" width="26.5" height="12.5" rx="2.5" fill="url(#pb)" stroke="#8090A4" stroke-width="0.9"/><rect x="4" y="10.5" width="19" height="4.5" rx="1.5" fill="#56667E"/><rect x="6.5" y="17.5" width="14" height="9" fill="#F4F6F8" stroke="#8A96A6" stroke-width="0.9"/><rect x="8" y="20.5" width="11" height="4.5" fill="#60A4E2"/><circle cx="22.5" cy="6.5" r="6.8" fill="url(#gLime)" stroke="#5A9A20" stroke-width="0.6"/><text x="22.5" y="10.3" font-size="10.5" font-weight="bold" text-anchor="middle" fill="#1E3A10" font-family="Liberation Sans">?</text></svg>
<div class="t" style="top:974.2px;height:20px;line-height:20px;font-size:15px;color:#0A0AE6;font-weight:bold;letter-spacing:0.09px;left:278.5px;">IN A4KCN</div>
<div class="a" style="left:367px;top:978px;width:12px;height:12px;background:linear-gradient(#F3F6FA,#DCE3EC);border:1px solid #98A8BD"></div>
<svg class="a" style="left:368px;top:979px;" width="10" height="10" viewBox="0 0 10 10"><path d="M1.5 5L4 8L8.5 1.5" stroke="#3A5A8A" stroke-width="1.6" fill="none"/></svg>
<div class="t" style="top:974.2px;height:20px;line-height:20px;font-size:15px;color:#1E2F4A;font-weight:bold;transform:scaleX(1.045);transform-origin:left center;left:379.5px;">XEM IN</div>
<svg class="a" style="left:449px;top:971px;" width="26" height="25" viewBox="0 0 26 25"><defs><linearGradient id="rx" x1="0" y1="0" x2="0" y2="1"><stop offset="0" stop-color="#F49A88"/><stop offset="0.5" stop-color="#E04A36"/><stop offset="1" stop-color="#B02A1A"/></linearGradient></defs><path d="M4 4.5 L13 12.5 L22 4.5 M4 20.5 L13 12.5 L22 20.5" stroke="#9A2012" stroke-width="7.2" stroke-linecap="round" fill="none"/><path d="M4 4.5 L13 12.5 L22 4.5 M4 20.5 L13 12.5 L22 20.5" stroke="url(#rx)" stroke-width="5.4" stroke-linecap="round" fill="none"/></svg>
<div class="t" style="top:974.2px;height:20px;line-height:20px;font-size:15px;color:#F00000;font-weight:bold;letter-spacing:-0.33px;left:482px;">THOÁT</div>
<div class="a" style="left:1372px;top:200px;width:540px;height:758px;background:#CFDCEC;border:1px solid #7E90A6;border-radius:3px 3px 0 0;box-shadow:inset 1px 1px 0 #EEF4FB"></div>
<div class="t" style="top:205.0px;height:14px;line-height:14px;font-size:10.5px;color:#5A6C98;letter-spacing:-0.37px;left:1377.2px;">DANH SÁCH PHIẾU</div>
<svg class="a" style="left:1878px;top:207px;" width="8" height="10" viewBox="0 0 8 10"><path d="M2.2 0.5 H5.8 V5.5 H2.2 Z" fill="none" stroke="#4A5A7E" stroke-width="1.2"/><path d="M0.5 6 H7.5 M4 6 V9.8" stroke="#4A5A7E" stroke-width="1.3"/></svg>
<svg class="a" style="left:1896px;top:208px;" width="10" height="8" viewBox="0 0 10 8"><path d="M1 0.8L9 7.2M9 0.8L1 7.2" stroke="#4A5A7E" stroke-width="2.2"/></svg>
<div class="t" style="top:227.0px;height:20px;line-height:20px;font-size:15px;color:#1E395B;transform:scaleX(0.919);transform-origin:left center;left:1377.3px;">Từ ngày</div>
<div class="t" style="top:227.0px;height:20px;line-height:20px;font-size:15px;color:#1E395B;letter-spacing:-0.56px;left:1652px;">Đến ngày</div>
<div class="a" style="left:1377px;top:251px;width:271px;height:24px;background:#FFFFFF;border:1px solid #93A7C3"></div>
<div class="a" style="left:1631px;top:252px;width:16px;height:22px;background:linear-gradient(#E6EFF9,#D3E0F0);border-left:1px solid #8FA3BF"></div>
<svg class="a" style="left:1636px;top:261px;" width="7" height="4" viewBox="0 0 7 4"><path d="M0 0H7L3.5 4Z" fill="#44557A"/></svg>
<div class="t" style="top:253.0px;height:20px;line-height:20px;font-size:15px;color:#000;letter-spacing:-0.05px;left:1381px;">01/11/2019</div>
<div class="a" style="left:1652px;top:251px;width:255px;height:24px;background:#FFFFFF;border:1px solid #93A7C3"></div>
<div class="a" style="left:1890px;top:252px;width:16px;height:22px;background:linear-gradient(#E6EFF9,#D3E0F0);border-left:1px solid #8FA3BF"></div>
<svg class="a" style="left:1895px;top:261px;" width="7" height="4" viewBox="0 0 7 4"><path d="M0 0H7L3.5 4Z" fill="#44557A"/></svg>
<div class="t" style="top:253.0px;height:20px;line-height:20px;font-size:15px;color:#000;letter-spacing:-0.13px;left:1656.7px;">13/11/2023</div>
<div class="t" style="top:282.0px;height:20px;line-height:20px;font-size:15px;color:#1E395B;transform:scaleX(0.894);transform-origin:left center;left:1377.3px;">Nhà c.cấp</div>
<div class="a" style="left:1457px;top:280px;width:450px;height:24px;background:#FFFFFF;border:1px solid #93A7C3"></div>
<div class="a" style="left:1870px;top:281px;width:16px;height:22px;background:linear-gradient(#E6EFF9,#D3E0F0);border-left:1px solid #8FA3BF"></div>
<svg class="a" style="left:1875px;top:290px;" width="7" height="4" viewBox="0 0 7 4"><path d="M0 0H7L3.5 4Z" fill="#44557A"/></svg>
<div class="a" style="left:1886px;top:281px;width:20px;height:22px;background:linear-gradient(#E6EFF9,#D3E0F0);border-left:1px solid #8FA3BF"></div>
<svg class="a" style="left:1888px;top:285px;" width="16" height="13" viewBox="0 0 16 13"><path d="M10.5 0.8 C6 0.5 3.2 3 3.3 6.8 L5.6 6.8 C5.6 4.2 7.5 2.3 10.5 0.8 Z" fill="#4DB030"/><path d="M0.2 6.3 L8.6 6.3 L4.4 10.6 Z" fill="#45A82E"/><path d="M5.5 12.6 C10 12.9 12.8 10.4 12.7 6.6 L10.4 6.6 C10.4 9.2 8.5 11.1 5.5 12.6 Z" fill="#3AAA3A"/><path d="M7.4 7 L15.8 7 L11.6 2.7 Z" fill="#3DAE36"/></svg>
<div class="t" style="top:312.0px;height:20px;line-height:20px;font-size:15px;color:#1E395B;transform:scaleX(0.849);transform-origin:left center;left:1377.3px;">Người lập</div>
<div class="a" style="left:1457px;top:309px;width:450px;height:24px;background:#FFFFFF;border:1px solid #93A7C3"></div>
<div class="a" style="left:1870px;top:310px;width:16px;height:22px;background:linear-gradient(#E6EFF9,#D3E0F0);border-left:1px solid #8FA3BF"></div>
<svg class="a" style="left:1875px;top:319px;" width="7" height="4" viewBox="0 0 7 4"><path d="M0 0H7L3.5 4Z" fill="#44557A"/></svg>
<div class="a" style="left:1886px;top:310px;width:20px;height:22px;background:linear-gradient(#E6EFF9,#D3E0F0);border-left:1px solid #8FA3BF"></div>
<svg class="a" style="left:1888px;top:314px;" width="16" height="13" viewBox="0 0 16 13"><path d="M10.5 0.8 C6 0.5 3.2 3 3.3 6.8 L5.6 6.8 C5.6 4.2 7.5 2.3 10.5 0.8 Z" fill="#4DB030"/><path d="M0.2 6.3 L8.6 6.3 L4.4 10.6 Z" fill="#45A82E"/><path d="M5.5 12.6 C10 12.9 12.8 10.4 12.7 6.6 L10.4 6.6 C10.4 9.2 8.5 11.1 5.5 12.6 Z" fill="#3AAA3A"/><path d="M7.4 7 L15.8 7 L11.6 2.7 Z" fill="#3DAE36"/></svg>
<div class="t" style="top:311.5px;height:20px;line-height:20px;font-size:15px;color:#000;transform:scaleX(0.917);transform-origin:left center;left:1460.8px;">Administrator</div>
<div class="a" style="left:1817px;top:339px;width:90px;height:23px;background:linear-gradient(#F2F6FB,#DCE5F1);border:1px solid #B3C3D8;border-radius:3px"></div>
<svg class="a" style="left:1821px;top:343px;" width="16" height="16" viewBox="0 0 16 16"><circle cx="6" cy="6" r="4.2" fill="none" stroke="#111" stroke-width="2.2"/><path d="M9 9L14 14" stroke="#111" stroke-width="3" stroke-linecap="round"/></svg>
<div class="t" style="top:340.8px;height:20px;line-height:20px;font-size:15px;color:#0A0AE6;font-weight:bold;letter-spacing:-0.63px;left:1840px;">Tìm kiếm</div>
<div class="a" style="left:1377px;top:366px;width:530px;height:587px;background:#fff;border:1px solid #829DC0"></div>
<div class="a" style="left:1378px;top:367px;width:528px;height:22px;background:linear-gradient(#F6F9FD,#E9EFF8 50%,#DDE6F3);border-bottom:1px solid #9AAECB"></div>
<div class="a" style="left:1400px;top:367px;width:1px;height:22px;background:#9FB3CF"></div>
<div class="a" style="left:1490px;top:367px;width:1px;height:22px;background:#9FB3CF"></div>
<div class="a" style="left:1593px;top:367px;width:1px;height:22px;background:#9FB3CF"></div>
<div class="a" style="left:1748px;top:367px;width:1px;height:22px;background:#9FB3CF"></div>
<div class="a" style="left:1823px;top:367px;width:1px;height:22px;background:#9FB3CF"></div>
<div class="a" style="left:1898px;top:367px;width:1px;height:22px;background:#9FB3CF"></div>
<div class="a" style="left:1378px;top:389px;width:22px;height:28px;background:#E9EFF8"></div>
<div class="a" style="left:1399px;top:389px;width:1px;height:29px;background:#9FB3CF"></div>
<div class="a" style="left:1378px;top:417px;width:528px;height:1px;background:#9AAECB"></div>
<div class="a" style="left:1490px;top:389px;width:1px;height:28px;background:#C5D5EB"></div>
<div class="a" style="left:1593px;top:389px;width:1px;height:28px;background:#C5D5EB"></div>
<div class="a" style="left:1748px;top:389px;width:1px;height:28px;background:#C5D5EB"></div>
<div class="a" style="left:1823px;top:389px;width:1px;height:28px;background:#C5D5EB"></div>
<div class="a" style="left:1898px;top:389px;width:1px;height:28px;background:#C5D5EB"></div>
<div class="a" style="left:1378px;top:418px;width:528px;height:5px;background:linear-gradient(#EAF1FA,#DCE6F2);border-bottom:1px solid #9DB3D0"></div>
<div class="a" style="left:1378px;top:423px;width:22px;height:111px;background:#E9EFF8"></div>
<div class="a" style="left:1399px;top:423px;width:1px;height:112px;background:#9FB3CF"></div>
<div class="a" style="left:1400px;top:506px;width:506px;height:28px;background:#DFE8F4"></div>
<div class="a" style="left:1593px;top:506px;width:155px;height:28px;background:linear-gradient(90deg,#FFFF00 0%,#FFFF40 55%,#FFFFC0 100%)"></div>
<div class="a" style="left:1378px;top:450px;width:22px;height:1px;background:#9FB3CF"></div>
<div class="a" style="left:1400px;top:450px;width:506px;height:1px;background:#C5D5EB"></div>
<div class="a" style="left:1378px;top:478px;width:22px;height:1px;background:#9FB3CF"></div>
<div class="a" style="left:1400px;top:478px;width:506px;height:1px;background:#C5D5EB"></div>
<div class="a" style="left:1378px;top:506px;width:22px;height:1px;background:#9FB3CF"></div>
<div class="a" style="left:1400px;top:506px;width:506px;height:1px;background:#C5D5EB"></div>
<div class="a" style="left:1378px;top:534px;width:22px;height:1px;background:#9FB3CF"></div>
<div class="a" style="left:1400px;top:534px;width:506px;height:1px;background:#C5D5EB"></div>
<div class="a" style="left:1490px;top:422px;width:1px;height:112px;background:#C5D5EB"></div>
<div class="a" style="left:1593px;top:422px;width:1px;height:112px;background:#C5D5EB"></div>
<div class="a" style="left:1748px;top:422px;width:1px;height:112px;background:#C5D5EB"></div>
<div class="a" style="left:1823px;top:422px;width:1px;height:112px;background:#C5D5EB"></div>
<div class="a" style="left:1898px;top:422px;width:1px;height:112px;background:#C5D5EB"></div>
<div class="t" style="top:369.2px;height:17px;line-height:17px;font-size:13px;color:#1E2F4A;font-weight:bold;letter-spacing:0.10px;left:1403.7px;">Ngày lập</div>
<div class="t" style="top:369.2px;height:17px;line-height:17px;font-size:13px;color:#1E2F4A;font-weight:bold;letter-spacing:0.12px;left:1495px;">Mã phiếu</div>
<div class="t" style="top:369.2px;height:17px;line-height:17px;font-size:13px;color:#1E2F4A;font-weight:bold;letter-spacing:0.06px;left:1597.8px;">Nhà cung cấp</div>
<div class="t" style="top:369.2px;height:17px;line-height:17px;font-size:13px;color:#1E2F4A;font-weight:bold;letter-spacing:0.06px;left:1753.5px;">Tổng tiền</div>
<div class="t" style="top:369.2px;height:17px;line-height:17px;font-size:13px;color:#1E2F4A;font-weight:bold;letter-spacing:-0.43px;left:1827.9px;">Ghi chú</div>
<div class="a" style="left:1899px;top:367px;width:7px;height:22px;overflow:hidden"><div class="t" style="left:3px;top:0;height:22px;line-height:22px;font-size:13px;font-weight:bold;color:#1E2F4A">I</div></div>
<svg class="a" style="left:1382px;top:400px;" width="7" height="8" viewBox="0 0 7 8"><circle cx="3.5" cy="2.2" r="2.2" fill="#111"/><circle cx="3.5" cy="2.2" r="0.8" fill="#fff"/><path d="M3.5 4 V8 M3.5 6.5 H5" stroke="#111" stroke-width="1.2"/></svg>
<svg class="a" style="left:1408px;top:401px;" width="9" height="4" viewBox="0 0 9 4"><path d="M0 0.5H9M0 3.5H9" stroke="#4A6FA8" stroke-width="1.1"/></svg>
<svg class="a" style="left:1495px;top:398px;" width="16" height="11" viewBox="0 0 16 11"><path d="M1 8.5 V4.5 L2 3.3 H2.8 L3.8 4.5 V8.5 M1 6.2 H3.8" stroke="#3E63A8" stroke-width="1" fill="none"/><rect x="4.3" y="0" width="7.2" height="11" rx="0.8" fill="#2EA344"/><rect x="6" y="2.8" width="3.6" height="5.6" rx="0.5" fill="#fff"/><circle cx="7.8" cy="4.4" r="0.55" fill="#2EA344"/><circle cx="7.8" cy="6.7" r="0.55" fill="#2EA344"/><path d="M15.6 3.5 H13.3 V8.3 H15.6" stroke="#3E63A8" stroke-width="1" fill="none"/></svg>
<svg class="a" style="left:1599px;top:398px;" width="16" height="11" viewBox="0 0 16 11"><path d="M1 8.5 V4.5 L2 3.3 H2.8 L3.8 4.5 V8.5 M1 6.2 H3.8" stroke="#3E63A8" stroke-width="1" fill="none"/><rect x="4.3" y="0" width="7.2" height="11" rx="0.8" fill="#2EA344"/><rect x="6" y="2.8" width="3.6" height="5.6" rx="0.5" fill="#fff"/><circle cx="7.8" cy="4.4" r="0.55" fill="#2EA344"/><circle cx="7.8" cy="6.7" r="0.55" fill="#2EA344"/><path d="M15.6 3.5 H13.3 V8.3 H15.6" stroke="#3E63A8" stroke-width="1" fill="none"/></svg>
<svg class="a" style="left:1757px;top:401px;" width="9" height="4" viewBox="0 0 9 4"><path d="M0 0.5H9M0 3.5H9" stroke="#4A6FA8" stroke-width="1.1"/></svg>
<svg class="a" style="left:1831px;top:398px;" width="16" height="11" viewBox="0 0 16 11"><path d="M1 8.5 V4.5 L2 3.3 H2.8 L3.8 4.5 V8.5 M1 6.2 H3.8" stroke="#3E63A8" stroke-width="1" fill="none"/><rect x="4.3" y="0" width="7.2" height="11" rx="0.8" fill="#2EA344"/><rect x="6" y="2.8" width="3.6" height="5.6" rx="0.5" fill="#fff"/><circle cx="7.8" cy="4.4" r="0.55" fill="#2EA344"/><circle cx="7.8" cy="6.7" r="0.55" fill="#2EA344"/><path d="M15.6 3.5 H13.3 V8.3 H15.6" stroke="#3E63A8" stroke-width="1" fill="none"/></svg>
<div class="a" style="left:1899px;top:389px;width:7px;height:27px;overflow:hidden"><svg class="a" style="left:3px;top:9px" width="14" height="11" viewBox="0 0 14 11"><text x="2" y="9" font-size="7.5" font-family="Liberation Mono" fill="#4A6FA8" text-anchor="middle">A</text></svg></div>
<div class="t" style="top:426.5px;height:20px;line-height:20px;font-size:15px;color:#000;letter-spacing:-0.13px;left:1404.7px;">13/11/2023</div>
<div class="t" style="top:426.5px;height:20px;line-height:20px;font-size:15px;color:#000;transform:scaleX(0.918);transform-origin:left center;left:1495.1px;">THN00004-1...</div>
<div class="t" style="top:426.5px;height:20px;line-height:20px;font-size:15px;color:#000;transform:scaleX(0.903);transform-origin:left center;left:1597.8px;">Nhà cung cấp Xiaomi ...</div>
<div class="t" style="top:426.5px;height:20px;line-height:20px;font-size:15px;color:#000;letter-spacing:-0.46px;right:100.70000000000005px;">700,000</div>
<div class="a" style="left:1899px;top:423.5px;width:7px;height:26px;overflow:hidden"><div class="t" style="left:3px;top:0;height:26px;line-height:26px;font-size:14px">A</div></div>
<div class="t" style="top:454.3px;height:20px;line-height:20px;font-size:15px;color:#000;letter-spacing:-0.13px;left:1404.7px;">13/11/2023</div>
<div class="t" style="top:454.3px;height:20px;line-height:20px;font-size:15px;color:#000;transform:scaleX(0.918);transform-origin:left center;left:1495.1px;">THN00003-1...</div>
<div class="t" style="top:454.3px;height:20px;line-height:20px;font-size:15px;color:#000;transform:scaleX(0.888);transform-origin:left center;left:1597.8px;">Điện Máy Samsung Vi...</div>
<div class="t" style="top:454.3px;height:20px;line-height:20px;font-size:15px;color:#000;letter-spacing:-0.46px;right:100.70000000000005px;">500,000</div>
<div class="a" style="left:1899px;top:451.3px;width:7px;height:26px;overflow:hidden"><div class="t" style="left:3px;top:0;height:26px;line-height:26px;font-size:14px">A</div></div>
<div class="t" style="top:482.1px;height:20px;line-height:20px;font-size:15px;color:#000;letter-spacing:-0.13px;left:1404.7px;">13/11/2023</div>
<div class="t" style="top:482.1px;height:20px;line-height:20px;font-size:15px;color:#000;transform:scaleX(0.918);transform-origin:left center;left:1495.1px;">THN00002-1...</div>
<div class="t" style="top:482.1px;height:20px;line-height:20px;font-size:15px;color:#000;transform:scaleX(0.912);transform-origin:left center;left:1597.8px;">Nhà cung cấp Apple V...</div>
<div class="t" style="top:482.1px;height:20px;line-height:20px;font-size:15px;color:#000;letter-spacing:-0.47px;right:100.70000000000005px;">1,000,000</div>
<div class="a" style="left:1899px;top:479.1px;width:7px;height:26px;overflow:hidden"><div class="t" style="left:3px;top:0;height:26px;line-height:26px;font-size:14px">A</div></div>
<div class="t" style="top:510.2px;height:20px;line-height:20px;font-size:15px;color:#000;letter-spacing:-0.24px;left:1404.7px;">14/07/2023</div>
<div class="t" style="top:510.2px;height:20px;line-height:20px;font-size:15px;color:#000;transform:scaleX(0.918);transform-origin:left center;left:1495.1px;">THN00001-1...</div>
<div class="t" style="top:510.2px;height:20px;line-height:20px;font-size:15px;color:#F00000;font-weight:bold;letter-spacing:-0.41px;left:1597.8px;">Điện Máy Samsung ...</div>
<div class="t" style="top:510.2px;height:20px;line-height:20px;font-size:15px;color:#000;letter-spacing:-0.38px;right:100.70000000000005px;">8,400,000</div>
<div class="t" style="top:510.2px;height:20px;line-height:20px;font-size:15px;color:#000;transform:scaleX(0.906);transform-origin:left center;left:1828.5px;">trả 2 cái ...</div>
<div class="a" style="left:1899px;top:507.20000000000005px;width:7px;height:26px;overflow:hidden"><div class="t" style="left:3px;top:0;height:26px;line-height:26px;font-size:14px">A</div></div>
<svg class="a" style="left:1384px;top:516px;" width="4" height="8" viewBox="0 0 4 8"><path d="M0 0L4 4L0 8Z" fill="#000"/></svg>
<div class="a" style="left:1378px;top:907px;width:528px;height:28px;background:linear-gradient(#EFF4FA,#DDE6F2);border-top:1px solid #9AAECB"></div>
<div class="a" style="left:1592px;top:913px;width:1px;height:19px;background:#8A9CB5"></div>
<div class="a" style="left:1822px;top:913px;width:1px;height:19px;background:#8A9CB5"></div>
<div class="t" style="top:912.8px;height:20px;line-height:20px;font-size:15px;color:#F00000;font-weight:bold;letter-spacing:-0.27px;right:332.20000000000005px;">Có 4 phiếu</div>
<div class="t" style="top:912.8px;height:20px;line-height:20px;font-size:15px;color:#F00000;font-weight:bold;transform:scaleX(1.031);transform-origin:right center;right:102.40000000000009px;">10,600...</div>
<div class="a" style="left:1378px;top:935px;width:528px;height:17px;background:linear-gradient(#E3EAF4,#D5DFEC)"></div>
<svg class="a" style="left:1383px;top:939px;" width="5" height="9" viewBox="0 0 5 9"><path d="M5 0L0 4.5L5 9Z" fill="#2A3548"/></svg>
<svg class="a" style="left:1895px;top:939px;" width="5" height="9" viewBox="0 0 5 9"><path d="M0 0L5 4.5L0 9Z" fill="#2A3548"/></svg>
<div class="a" style="left:1395px;top:936px;width:384px;height:15px;background:linear-gradient(#F2F6FB,#D9E3EF);border:1px solid #9DB1CC;border-radius:3px"></div>
<svg class="a" style="left:1583px;top:939px;" width="7" height="9" viewBox="0 0 7 9"><path d="M0.5 0V9M2.5 0V9M4.5 0V9M6.5 0V9" stroke="#7C8EA8" stroke-width="0.9"/></svg>
<div class="a" style="left:1616px;top:530px;width:145px;height:27px;background:rgba(0,0,0,0.35);filter:blur(1.5px)"></div>
<div class="a" style="left:1613px;top:527px;width:145px;height:27px;background:#F5F5F5;border:1px solid #8A8A8A"></div>
<div class="a" style="left:1615px;top:529px;width:142px;height:24px;background:#B9D7F2;border:2px solid #1A76D8"></div>
<svg class="a" style="left:1618px;top:533px;" width="16" height="15" viewBox="0 0 16 15"><path d="M2 1 L8 6.5 L14 0.5 M8 6.5 L13 14 M8 6.5 L2 14" stroke="#D41A1A" stroke-width="2.6" fill="none" stroke-linecap="round"/></svg>
<div class="t" style="top:531.2px;height:20px;line-height:20px;font-size:15px;color:#F00000;font-weight:bold;letter-spacing:-0.57px;left:1650px;">Xóa phiếu</div>
<svg class="a" style="left:1675px;top:550px;" width="13" height="20" viewBox="0 0 13 20"><path d="M0.5 0.5 L0.5 16 L4 12.5 L7 19 L9.5 18 L6.5 11.5 L11.5 11.5 Z" fill="#fff" stroke="#000" stroke-width="1"/></svg>
<div class="a" style="left:0px;top:1010px;width:1920px;height:5px;background:linear-gradient(#B8C6D7,#D4DEEA)"></div>
<div class="a" style="left:0px;top:1015px;width:1920px;height:24px;background:linear-gradient(#DDE8F5,#CCD9EA 50%,#B4C5DB);border-top:1px solid #7F98BA;box-shadow:inset 0 1px 0 #F6F9FD"></div>
<div class="t" style="top:1021.5px;height:14px;line-height:14px;font-size:11px;color:#8796AC;font-weight:bold;transform:scaleX(1.067);transform-origin:left center;left:6.2px;">Chào mừng: administrator đến với phần mềm mekongsoft</div>
<div class="t" style="top:1021.5px;height:14px;line-height:14px;font-size:11px;color:#8796AC;letter-spacing:0.14px;left:342.5px;">|</div>
<div class="t" style="top:1021.5px;height:14px;line-height:14px;font-size:11px;color:#8796AC;letter-spacing:0.01px;left:355.5px;">Version: 4.8.0</div>
<div class="t" style="top:1021.5px;height:14px;line-height:14px;font-size:11px;color:#8796AC;letter-spacing:0.14px;left:434.5px;">|</div>
<div class="t" style="top:1021.5px;height:14px;line-height:14px;font-size:11px;color:#8796AC;letter-spacing:0.06px;left:447.3px;">Ngày: 13/11/2023 11:37:56 SA</div>
<div class="a" style="left:1616px;top:1019px;width:1px;height:20px;background:#A7B6CA"></div>
<div class="a" style="left:1617px;top:1019px;width:1px;height:20px;background:#F3F7FC"></div>
<div class="t" style="top:1021.5px;height:14px;line-height:14px;font-size:11px;color:#8796AC;font-weight:bold;transform:scaleX(1.072);transform-origin:right center;right:7.5px;">@2023 MekongSoft. Thông tin hỗ trợ: 0901 000 508</div>
</body></html>
